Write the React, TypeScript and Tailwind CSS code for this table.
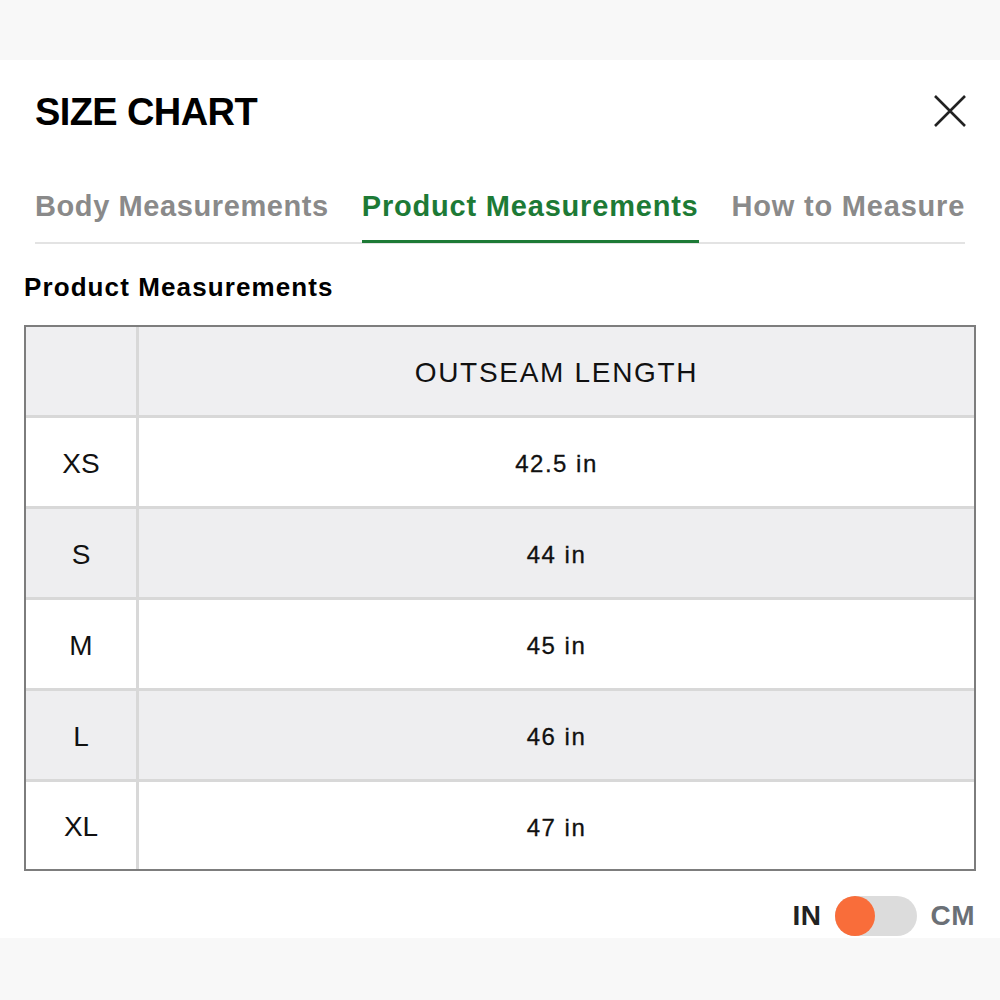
import React from 'react';

const rows = [
  { size: 'XS', value: '42.5 in' },
  { size: 'S', value: '44 in' },
  { size: 'M', value: '45 in' },
  { size: 'L', value: '46 in' },
  { size: 'XL', value: '47 in' },
];

const font = { fontFamily: '"Liberation Sans", Arial, sans-serif' };

export default function App() {
  return (
    <div className="w-[1000px] h-[1000px] bg-[#f8f8f8] overflow-hidden" style={font}>
      <div className="h-[60px]" />

      {/* Panel */}
      <div className="bg-white h-[878px] flex flex-col">
        {/* Header */}
        <div className="flex items-start justify-between pl-[35px] pr-[35px] pt-[33px]">
          <h1 className="text-[38px] leading-none font-bold text-black tracking-[-0.6px]">SIZE CHART</h1>
          <svg width="32" height="32" viewBox="0 0 32 32" className="mt-[2px] mr-[-1px]">
            <path d="M1 1 L31 31 M31 1 L1 31" stroke="#222" strokeWidth="2.6" />
          </svg>
        </div>

        {/* Tabs */}
        <div className="mx-[35px] mt-[61px] flex gap-[33px] whitespace-nowrap border-b-2 border-[#e3e3e3]">
          <div className="shrink-0 pb-[21px] text-[29px] leading-none font-bold tracking-[0.6px] text-[#8a8a8a]">
            Body Measurements
          </div>
          <div className="shrink-0 pb-[18px] mb-[-1px] border-b-[3px] border-[#1d7a36] text-[29px] leading-none font-bold tracking-[0.8px] text-[#1d7a36]">
            Product Measurements
          </div>
          <div className="shrink-0 pb-[21px] text-[29px] leading-none font-bold tracking-[0.8px] text-[#8a8a8a]">
            How to Measure
          </div>
        </div>

        <h2 className="pl-[24px] mt-[30px] text-[26px] leading-none font-bold tracking-[1.1px] text-black">
          Product Measurements
        </h2>

        {/* Table */}
        <div className="mx-[24px] mt-[25px] border-2 border-[#7d7d7d]">
          <div className="flex h-[91px] border-b-[3px] border-[#d8d8d8] bg-[#efeff1]">
            <div className="w-[113px] border-r-[3px] border-[#d8d8d8]" />
            <div className="flex-1 flex items-center justify-center pt-[4px] text-[28px] tracking-[1.7px] text-[#111]">
              OUTSEAM LENGTH
            </div>
          </div>
          {rows.map((r, i) => (
            <div
              key={r.size}
              className={`flex ${i === rows.length - 1 ? 'h-[87px]' : 'h-[91px] border-b-[3px] border-[#d8d8d8]'} ${i % 2 === 1 ? 'bg-[#eeeef0]' : 'bg-white'}`}
            >
              <div className="w-[113px] border-r-[3px] border-[#d8d8d8] flex items-center justify-center pt-[3px] text-[28px] text-[#111]">
                {r.size}
              </div>
              <div className="flex-1 flex items-center justify-center pt-[4px] text-[24px] tracking-[1.5px] text-[#111] [-webkit-text-stroke:0.3px_#111]">
                {r.value}
              </div>
            </div>
          ))}
        </div>

        {/* Unit toggle */}
        <div className="mt-[25px] pr-[25px] flex items-center justify-end">
          <span className="text-[28px] leading-none font-bold text-[#222] tracking-[0.5px]">IN</span>
          <div className="ml-[14px] w-[82px] h-[40px] rounded-full bg-[#dcdcdc] flex items-center">
            <div className="w-[40px] h-[40px] rounded-full bg-[#f96d3a]" />
          </div>
          <span className="ml-[13px] text-[28px] leading-none font-bold text-[#6b7076] tracking-[0.5px]">CM</span>
        </div>
      </div>
    </div>
  );
}
